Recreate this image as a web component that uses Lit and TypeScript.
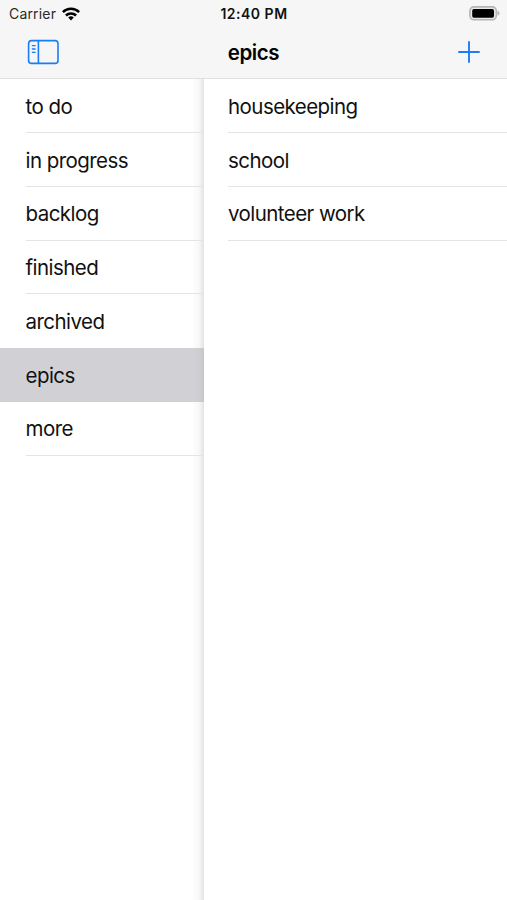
import { LitElement, html, css } from "lit";
import { customElement } from "lit/decorators.js";
import { classMap } from "lit/directives/class-map.js";

const LISTS = ["to do", "in progress", "backlog", "finished", "archived", "epics", "more"];
const EPICS = ["housekeeping", "school", "volunteer work"];

@customElement("app-root")
export class AppRoot extends LitElement {
  static styles = css`
    :host {
      display: flex;
      flex-direction: column;
      height: 900px;
      overflow: hidden;
      background: #fff;
      color: #111;
      font-family: Inter, "Liberation Sans", sans-serif;
    }
    svg { display: block; }
    header {
      box-sizing: border-box;
      height: 79.4px;
      flex: none;
      background: #f6f6f6;
      border-bottom: 1px solid #e0e0e0;
    }
    .status, .nav {
      display: grid;
      grid-template-columns: 1fr auto 1fr;
      align-items: center;
    }
    .status { height: 27px; padding: 0 7px 0 9px; }
    .carrier {
      display: flex;
      align-items: center;
      gap: 6px;
      font-size: 14px;
      letter-spacing: 0.18px;
      color: #2a2a2a;
    }
    .time {
      font-size: 14px;
      font-weight: 600;
      letter-spacing: 0.5px;
      margin-right: 1px;
    }
    .right { justify-self: end; }
    .nav { height: 50px; padding: 0 27px; }
    .title {
      margin: 0;
      padding-top: 1px;
      font-size: 20.5px;
      font-weight: 600;
      letter-spacing: -0.4px;
      color: #000;
    }
    .panes { flex: 1; display: flex; min-height: 0; }
    .side {
      width: 203.5px;
      flex: none;
      background: linear-gradient(to right, transparent 192px, #00000008 199px, #0000001a 203.5px);
    }
    .detail { flex: 1; }
    ul { list-style: none; margin: 0; padding: 0; }
    li {
      box-sizing: border-box;
      height: 53.75px;
      padding-left: 25.5px;
      font-size: 20.5px;
      letter-spacing: -0.55px;
    }
    .detail li { padding-left: 24.5px; }
    .label {
      box-sizing: border-box;
      height: 100%;
      display: flex;
      align-items: center;
      padding-top: 1.4px;
      border-bottom: 1px solid #e4e4e5;
    }
    .selected { background: rgba(180, 180, 188, 0.62); }
    .selected .label, .before .label { border-color: transparent; }
  `;

  render() {
    const selected = LISTS.indexOf("epics");
    return html`
      <header>
        <div class="status">
          <div class="carrier">
            <span>Carrier</span>
            <svg width="18" height="14" viewBox="0 0 18 14" fill="none" stroke="#000" stroke-width="2.5">
              <path d="M.9 5.2a11.5 11.5 0 0 1 16.2 0" />
              <path d="M3.9 8.5a7.2 7.2 0 0 1 10.2 0" />
              <path d="M9 13.4 6.2 10.6a4 4 0 0 1 5.6 0Z" fill="#000" stroke="none" />
            </svg>
          </div>
          <span class="time">12:40 PM</span>
          <svg class="right" width="31" height="15" viewBox="0 0 31 15">
            <rect x=".9" y=".9" width="26.4" height="12.9" rx="4" fill="#e8e8e8" stroke="#b5b5b5" stroke-width="1.6" />
            <rect x="3.2" y="3" width="21.8" height="8.7" rx="1.7" fill="#000" />
            <path d="M28.5 4.6v5.2q2-.8 2-2.6t-2-2.6Z" fill="#b5b5b5" />
          </svg>
        </div>
        <div class="nav">
          <svg width="32" height="26" viewBox="0 0 32 26" fill="none" stroke="#1a7df5" stroke-width="1.6">
            <rect x="1.6" y="1.6" width="29.4" height="22.8" rx="3" />
            <path d="M11.4 1.6v22.8" />
            <path d="M4.8 6.6h3.8M4.8 10h3.8M4.8 13.4h3.8" stroke-width="1.4" />
          </svg>
          <h1 class="title">epics</h1>
          <svg class="right" width="22" height="22" viewBox="0 0 22 22" stroke="#1a7df5" stroke-width="1.9" stroke-linecap="round">
            <path d="M11 1v20M1 11h20" />
          </svg>
        </div>
      </header>
      <div class="panes">
        <ul class="side">
          ${LISTS.map(
            (name, i) => html`<li class=${classMap({ selected: i === selected, before: i === selected - 1 })}>
              <div class="label">${name}</div>
            </li>`
          )}
        </ul>
        <ul class="detail">
          ${EPICS.map((name) => html`<li><div class="label">${name}</div></li>`)}
        </ul>
      </div>
    `;
  }
}
